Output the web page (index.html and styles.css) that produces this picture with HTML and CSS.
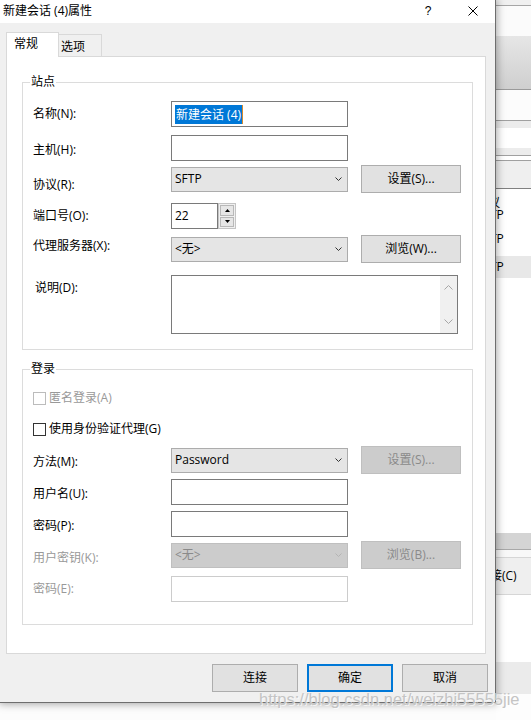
FILE: index.html
```html
<!DOCTYPE html>
<html lang="zh-CN">
<head>
<meta charset="utf-8">
<title>新建会话 (4)属性</title>
<link rel="stylesheet" href="styles.css">
</head>
<body>
<div class="screen">
  <div class="left-col">
    <div class="dialog">
      <div class="titlebar">
        <span class="title">新建会话 (4)属性</span>
        <span class="help">?</span>
        <span class="close"><svg width="10" height="10" viewBox="0 0 10 10"><path d="M0.5 0.5 L9.5 9.5 M9.5 0.5 L0.5 9.5" stroke="#000" stroke-width="1" fill="none"/></svg></span>
      </div>
      <div class="dlg-body">
        <div class="tabs">
          <div class="tab tab-active">常规</div>
          <div class="tab tab-idle">选项</div>
        </div>
        <div class="panel">
          <div class="group group-site">
            <div class="legend">站点</div>
            <div class="row r-name">
              <span class="lbl">名称(N):</span>
              <div class="field"><span class="sel">新建会话 (4)</span></div>
            </div>
            <div class="row r-host">
              <span class="lbl dn2">主机(H):</span>
              <div class="field"></div>
            </div>
            <div class="row r-proto">
              <span class="lbl dn6">协议(R):</span>
              <div class="combo"><span>SFTP</span><svg class="chev" width="7" height="4" viewBox="0 0 7 4"><path d="M0.5 0.5 L3.5 3.5 L6.5 0.5" fill="none" stroke="#333" stroke-width="1"/></svg></div>
              <span></span>
              <div class="btn">设置(S)...</div>
            </div>
            <div class="row r-port">
              <span class="lbl">端口号(O):</span>
              <div class="spin-wrap">
                <div class="field port">22</div>
                <div class="spin">
                  <div class="spin-btn"><svg width="5" height="3" viewBox="0 0 5 3"><path d="M2.5 0 L5 3 L0 3 Z" fill="#000"/></svg></div>
                  <div class="spin-btn"><svg width="5" height="3" viewBox="0 0 5 3"><path d="M0 0 L5 0 L2.5 3 Z" fill="#000"/></svg></div>
                </div>
              </div>
            </div>
            <div class="row r-proxy">
              <span class="lbl up3">代理服务器(X):</span>
              <div class="combo"><span>&lt;无&gt;</span><svg class="chev" width="7" height="4" viewBox="0 0 7 4"><path d="M0.5 0.5 L3.5 3.5 L6.5 0.5" fill="none" stroke="#333" stroke-width="1"/></svg></div>
              <span></span>
              <div class="btn">浏览(W)...</div>
            </div>
            <div class="row r-desc">
              <span class="lbl top5">说明(D):</span>
              <div class="textarea">
                <div class="ta-text"></div>
                <div class="scrollbar">
                  <svg width="9" height="5" viewBox="0 0 9 5"><path d="M0.5 4.5 L4.5 0.5 L8.5 4.5" fill="none" stroke="#a6a6a6" stroke-width="1"/></svg>
                  <svg width="9" height="5" viewBox="0 0 9 5"><path d="M0.5 0.5 L4.5 4.5 L8.5 0.5" fill="none" stroke="#a6a6a6" stroke-width="1"/></svg>
                </div>
              </div>
            </div>
          </div>

          <div class="group group-login">
            <div class="legend">登录</div>
            <div class="check-row r-anon off">
              <span class="box box-off"></span><span>匿名登录(A)</span>
            </div>
            <div class="check-row r-agent">
              <span class="box"></span><span>使用身份验证代理(G)</span>
            </div>
            <div class="row r-method">
              <span class="lbl dn2">方法(M):</span>
              <div class="combo"><span>Password</span><svg class="chev" width="7" height="4" viewBox="0 0 7 4"><path d="M0.5 0.5 L3.5 3.5 L6.5 0.5" fill="none" stroke="#333" stroke-width="1"/></svg></div>
              <span></span>
              <div class="btn btn-off">设置(S)...</div>
            </div>
            <div class="row r-user">
              <span class="lbl dn2">用户名(U):</span>
              <div class="field"></div>
            </div>
            <div class="row r-pass">
              <span class="lbl dn2">密码(P):</span>
              <div class="field"></div>
            </div>
            <div class="row r-key">
              <span class="lbl dn3 off">用户密钥(K):</span>
              <div class="combo combo-off"><span>&lt;无&gt;</span><svg class="chev" width="7" height="4" viewBox="0 0 7 4"><path d="M0.5 0.5 L3.5 3.5 L6.5 0.5" fill="none" stroke="#b4b4b4" stroke-width="1"/></svg></div>
              <span></span>
              <div class="btn btn-off">浏览(B)...</div>
            </div>
            <div class="row r-pass2">
              <span class="lbl off">密码(E):</span>
              <div class="field field-off"></div>
            </div>
          </div>
        </div>
        <div class="actions">
          <div class="btn">连接</div>
          <div class="btn btn-default">确定</div>
          <div class="btn">取消</div>
        </div>
      </div>
    </div>
    <div class="below"></div>
  </div>

  <div class="strip">
    <div class="st st-a"></div>
    <div class="st st-b"></div>
    <div class="st st-c"></div>
    <div class="st st-d"></div>
    <div class="st st-e"></div>
    <div class="st st-f"></div>
    <div class="st st-g"></div>
    <div class="st st-h"></div>
    <div class="st st-i"></div>
    <div class="st st-list">
      <div class="li li-gap7"></div>
      <div class="li li-13"><span class="cut-yi">议</span></div>
      <div class="li li-12"><span class="cut-tp">TP</span></div>
      <div class="li li-gap11"></div>
      <div class="li li-13"><span class="cut-tp">TP</span></div>
      <div class="li li-gap11"></div>
      <div class="li li-hl"><span class="cut-tp">TP</span></div>
    </div>
    <div class="st st-j"></div>
    <div class="st st-k"></div>
    <div class="st st-l"><span class="cut-conn">连接(C)</span></div>
    <div class="st st-m"></div>
    <div class="st st-n"></div>
    <div class="st st-o"></div>
  </div>

  <div class="watermark">https://blog.csdn.net/weizhi55555jie</div>
</div>
</body>
</html>
```

FILE: styles.css
```css
* { box-sizing: border-box; }
html, body { margin: 0; padding: 0; }
body {
  width: 531px;
  height: 720px;
  overflow: hidden;
  font-family: "Open Sans", "Noto Sans CJK SC", sans-serif;
  font-size: 12px;
  color: #000;
  background: #fdfdfd;
}
.screen {
  position: relative;
  display: grid;
  grid-template-columns: 496px 35px;
  height: 720px;
}
.left-col {
  display: flex;
  flex-direction: column;
  background: #fcfcfc;
}
.dialog {
  position: relative;
  z-index: 1;
  width: 496px;
  height: 703px;
  flex: none;
  border-right: 1px solid #6e6e6e;
  border-bottom: 1px solid #6e6e6e;
  background: #f0f0f0;
  box-shadow: 0 0 8px 1px rgba(0, 0, 0, 0.35);
  display: flex;
  flex-direction: column;
}
.below { flex: 1; }

/* title bar */
.titlebar {
  height: 23px;
  flex: none;
  background: #fff;
  display: flex;
  align-items: center;
  padding: 0 17px 2px 3px;
  line-height: 16px;
}
.title { flex: 1; }
.help {
  width: 8px;
  text-align: center;
  margin-right: 36px;
  font-family: "Liberation Sans", sans-serif;
  font-size: 12px;
}
.close { display: flex; }

/* body */
.dlg-body {
  flex: 1;
  padding: 9px 9px 10px 6px;
  display: flex;
  flex-direction: column;
}
.tabs {
  display: flex;
  align-items: flex-end;
  height: 24px;
}
.tab {
  border: 1px solid #d9d9d9;
  border-bottom: none;
  line-height: 16px;
}
.tab-active {
  position: relative;
  z-index: 1;
  width: 53px;
  height: 25px;
  margin-bottom: -1px;
  background: #fff;
  padding: 3px 0 0 7px;
}
.tab-idle {
  width: 44px;
  height: 22px;
  margin-left: -1px;
  background: #f0f0f0;
  padding: 4px 0 0 2px;
}
.panel {
  width: 480px;
  height: 598px;
  border: 1px solid #d9d9d9;
  background: #fff;
  padding: 25px 0 0 15px;
}
.group {
  position: relative;
  width: 451px;
  border: 1px solid #dcdcdc;
  padding: 0 0 0 10px;
}
.group-site { padding-bottom: 15px; }
.group-login { margin-top: 19px; padding-bottom: 22px; }
.legend {
  position: absolute;
  top: -9px;
  left: 7px;
  padding: 0 1px;
  background: #fff;
  line-height: 16px;
}

/* rows */
.row {
  display: grid;
  grid-template-columns: 138px 177px 13px 100px;
  align-items: center;
}
.lbl { line-height: 16px; white-space: nowrap; }
.dn2 { margin-top: 4px; }
.dn3 { margin-top: 6px; }
.dn6 { margin-top: 12px; }
.up3 { margin-bottom: 6px; }
.top5 { align-self: start; margin-top: 5px; margin-left: 2px; }
.off { color: #999; }

.r-name  { margin-top: 18px; height: 26px; }
.r-host  { margin-top: 8px;  height: 26px; }
.r-proto { margin-top: 4px;  height: 28px; }
.r-port  { margin-top: 10px; height: 26px; }
.r-proxy { margin-top: 6px;  height: 28px; }
.r-desc  { margin-top: 12px; height: 59px; align-items: start; }

.r-anon   { margin-top: 19px; }
.r-agent  { margin-top: 13px; }
.r-method { margin-top: 8px; height: 28px; }
.r-user   { margin-top: 5px; height: 26px; }
.r-pass   { margin-top: 6px; height: 26px; }
.r-key    { margin-top: 4px; height: 28px; }
.r-pass2  { margin-top: 7px; height: 26px; }

/* controls */
.field {
  height: 26px;
  border: 1px solid #7a7a7a;
  background: #fff;
  padding-left: 3px;
  display: flex;
  align-items: center;
  line-height: 16px;
}
.field-off { border-color: #cccccc; }
.sel {
  background: #0078d7;
  color: #fff;
  line-height: 19px;
  padding: 0 1px 0 1px;
  box-shadow: 1px 0 0 #d98a2b;
}
.combo {
  height: 25px;
  border: 1px solid #acacac;
  background: #e5e5e5;
  display: flex;
  align-items: center;
  justify-content: space-between;
  padding: 0 5px 0 3px;
  line-height: 16px;
}
.combo-off {
  background: #cccccc;
  border-color: #bfbfbf;
  color: #8a8a8a;
}
.btn {
  height: 28px;
  border: 1px solid #adadad;
  background: #e1e1e1;
  display: flex;
  align-items: center;
  justify-content: center;
  line-height: 16px;
}
.btn-off {
  background: #cccccc;
  border-color: #bfbfbf;
  color: #8a8a8a;
}
.spin-wrap {
  display: flex;
  gap: 0;
  height: 26px;
}
.port { width: 47px; }
.spin {
  width: 18px;
  height: 26px;
  border: 1px solid #c4c4c4;
  background: #f0f0f0;
  display: flex;
  flex-direction: column;
  gap: 1px;
  padding: 1px;
}
.spin-btn {
  flex: 1;
  background: #e6e6e6;
  border: 1px solid #b8b8b8;
  display: flex;
  align-items: center;
  justify-content: center;
}
.textarea {
  grid-column: 2 / span 3;
  width: 287px;
  height: 59px;
  border: 1px solid #7a7a7a;
  background: #fff;
  display: flex;
  justify-content: space-between;
}
.scrollbar {
  width: 17px;
  background: #f0f0f0;
  display: flex;
  flex-direction: column;
  align-items: center;
  justify-content: space-between;
  padding: 9px 0 9px;
}

/* checkboxes */
.check-row {
  display: flex;
  align-items: center;
  gap: 3px;
  height: 18px;
  line-height: 16px;
}
.box {
  width: 13px;
  height: 13px;
  border: 1px solid #333;
  background: #fff;
}
.box-off { border-color: #bcbcbc; }

/* bottom buttons */
.actions {
  display: flex;
  justify-content: flex-end;
  gap: 9px;
  margin-top: 10px;
  margin-right: -2px;
}
.actions .btn { width: 86px; }
.btn-default { border: 2px solid #0078d7; }

/* background window strip */
.strip {
  display: flex;
  flex-direction: column;
  overflow: hidden;
  background: #fff;
  line-height: 16px;
}
.st { flex: none; overflow: hidden; white-space: nowrap; }
.st-a { height: 6px; background: #f0f0f0; border-bottom: 1px solid #a6a6a6; }
.st-b { height: 30px; background: #fbfbfb; }
.st-c { height: 54px; background: linear-gradient(#e6e6e6, #cfcfcf); border-bottom: 1px solid #9a9a9a; }
.st-d { height: 31px; background: #fcfcfc; border-bottom: 1px solid #a0a0a0; }
.st-e { height: 7px; background: #ececec; }
.st-f { height: 20px; background: #fff; }
.st-g { height: 8px; background: #ececec; border-bottom: 1px solid #a0a0a0; }
.st-h { height: 5px; background: #fff; border-bottom: 1px solid #a0a0a0; }
.st-i { height: 28px; background: #efefef; border-bottom: 1px solid #808080; }
.st-list { height: 344px; background: #fff; display: flex; flex-direction: column; }
.li { flex: none; display: flex; align-items: center; overflow: hidden; white-space: nowrap; line-height: 12px; }
.li-gap7 { height: 7px; }
.li-gap11 { height: 11px; }
.li-13 { height: 13px; }
.li-12 { height: 12px; }
.li-hl { height: 22px; background: #e8e8e8; }
.cut-yi { margin-left: -8px; }
.cut-tp { margin-left: -6px; }
.st-j { height: 17px; background: #d4d4d4; border-bottom: 1px solid #a8a8a8; }
.st-k { height: 7px; background: #f8f8f8; }
.st-l {
  height: 38px;
  background: #efefef;
  border-top: 1px solid #d6d6d6;
  border-bottom: 1px solid #d6d6d6;
  display: flex;
  align-items: center;
}
.cut-conn { margin-left: -18px; }
.st-m { height: 67px; background: #fff; }
.st-n { height: 32px; background: #ebebeb; }
.st-o { height: 26px; background: #fdfdfd; }

/* watermark overlay */
.watermark {
  position: absolute;
  left: 259px;
  top: 689px;
  z-index: 2;
  font-family: "Liberation Sans", sans-serif;
  font-size: 16.5px;
  line-height: 20px;
  color: #c4c4c4;
  text-shadow: 1px 1px 0 rgba(255, 255, 255, 0.7);
  white-space: nowrap;
}
```
